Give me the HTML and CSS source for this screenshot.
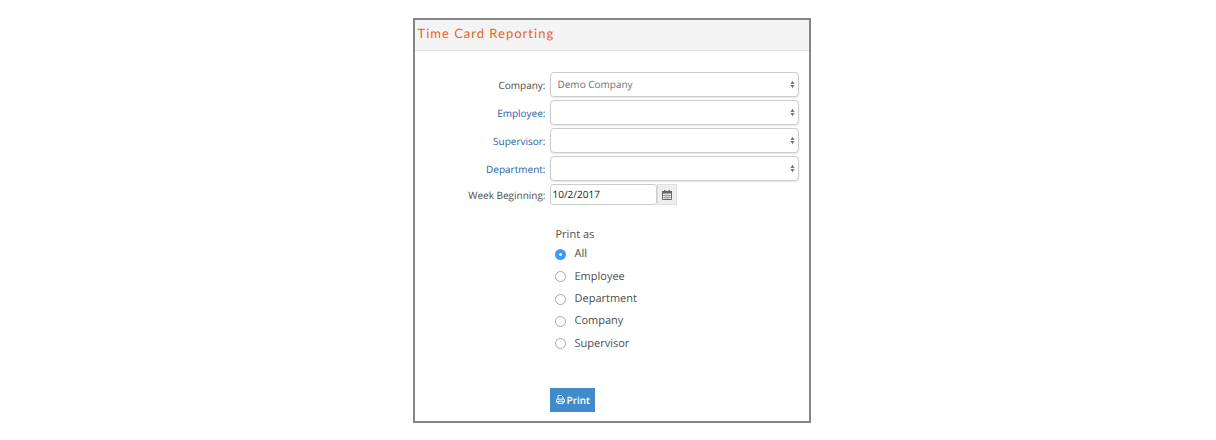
FILE: index.html
```
<!DOCTYPE html>
<html lang="en">
<head>
<meta charset="UTF-8">
<meta name="viewport" content="width=device-width, initial-scale=1.0">
<title>Time Card Reporting</title>
<link rel="stylesheet" href="styles.css">
</head>
<body>

<main class="panel">
    <header class="panel-header">
        <h1>Time Card Reporting</h1>
    </header>
    <form class="report-form" onsubmit="return false">
        <div class="field">
            <label for="company">Company:</label>
            <div class="select">
                <select id="company"><option>Demo Company</option></select>
                <svg class="arrows" viewBox="0 0 6 10" aria-hidden="true"><path d="M3 0.5 5.5 4.5h-5zM3 9.5 5.5 5.5h-5z"/></svg>
            </div>
        </div>
        <div class="field">
            <label for="employee"><a href="#employee">Employee</a>:</label>
            <div class="select">
                <select id="employee"><option></option></select>
                <svg class="arrows" viewBox="0 0 6 10" aria-hidden="true"><path d="M3 0.5 5.5 4.5h-5zM3 9.5 5.5 5.5h-5z"/></svg>
            </div>
        </div>
        <div class="field">
            <label for="supervisor"><a href="#supervisor">Supervisor</a>:</label>
            <div class="select">
                <select id="supervisor"><option></option></select>
                <svg class="arrows" viewBox="0 0 6 10" aria-hidden="true"><path d="M3 0.5 5.5 4.5h-5zM3 9.5 5.5 5.5h-5z"/></svg>
            </div>
        </div>
        <div class="field">
            <label for="department"><a href="#department">Department</a>:</label>
            <div class="select">
                <select id="department"><option></option></select>
                <svg class="arrows" viewBox="0 0 6 10" aria-hidden="true"><path d="M3 0.5 5.5 4.5h-5zM3 9.5 5.5 5.5h-5z"/></svg>
            </div>
        </div>
        <div class="field">
            <label for="week">Week Beginning:</label>
            <div class="date">
                <input type="text" id="week" value="10/2/2017">
                <button type="button" class="date-button" aria-label="Choose date">
                    <svg viewBox="0 0 10 10" aria-hidden="true">
                        <path d="M0.5 1.5h9v8h-9z" fill="#fff" stroke="#666"/>
                        <path d="M0 1h10v2.5H0zM2 0h1.5v2H2zM6.5 0H8v2H6.5z" fill="#666"/>
                        <path d="M1 5.5h8M1 7.5h8M3 3.5v6M5 3.5v6M7 3.5v6" fill="none" stroke="#666" stroke-width="0.5"/>
                    </svg>
                </button>
            </div>
        </div>

        <fieldset class="print-as">
            <legend>Print as</legend>
            <div class="options">
                <label><input type="radio" name="print-as" checked>All</label>
                <label><input type="radio" name="print-as">Employee</label>
                <label><input type="radio" name="print-as">Department</label>
                <label><input type="radio" name="print-as">Company</label>
                <label><input type="radio" name="print-as">Supervisor</label>
            </div>
        </fieldset>

        <button type="submit" class="print-button">
            <svg viewBox="0 0 9 9" aria-hidden="true">
                <path d="M2 4V0.5h3.5L7 2v2M2 7H0.5V5q0-.8.8-.8h6.4q.8 0 .8.8v2H7M2 6.2h5v2.3H2z" fill="none" stroke="#fff"/>
            </svg>
            Print
        </button>
    </form>
</main>

</body>
</html>
```

FILE: styles.css
```
*, *:before, *:after {
    box-sizing: border-box;
}

body {
    margin: 0;
    padding: 18px 0 16px 7px;
    background: #fff;
    color: #4d4d4d;
    font: 10px/16px 'Open Sans', sans-serif;
    text-rendering: geometricPrecision;
}

button, input, select {
    margin: 0;
    font: inherit;
    text-rendering: inherit;
}

a {
    color: #2562a8;
    text-decoration: none;
}

svg {
    display: block;
}

.panel {
    max-width: 398px;
    margin: 0 auto;
    border: 2px solid #858585;
}

.panel-header {
    padding: 4px 3px 8px;
    background: #f4f4f4;
    border-bottom: 1px solid #e0e0e0;
}

.panel-header h1 {
    margin: 0;
    color: #e8622c;
    font: 400 13px/18px Lato, sans-serif;
    letter-spacing: 1px;
}

.report-form {
    padding: 21px 10px 9px 0;
}

.field {
    display: grid;
    grid-template-columns: 131px 1fr;
    column-gap: 4px;
    align-items: center;
    margin-bottom: 3px;
}

.field > label {
    text-align: right;
}

.select {
    position: relative;
}

.select select {
    display: block;
    width: 100%;
    height: 25px;
    padding: 0 20px 1px 7px;
    appearance: none;
    background: #fff;
    border: 1px solid #ccc;
    border-radius: 4px;
    box-shadow: 0 1px 2px rgba(0, 0, 0, 0.1);
    color: #707070;
}

.arrows {
    position: absolute;
    top: 8px;
    right: 4px;
    width: 5px;
    height: 9px;
    fill: #777;
    pointer-events: none;
}

.date {
    display: flex;
}

.date input {
    width: 107px;
    height: 21px;
    padding: 0 2px 1px;
    background: #fff;
    border: 1px solid #ccc;
    border-radius: 3px;
    color: #222;
}

.date-button {
    display: flex;
    align-items: center;
    justify-content: center;
    width: 20px;
    height: 21px;
    padding: 0;
    background: #eee;
    border: 1px solid #ddd;
}

.date-button svg {
    width: 10px;
    height: 10px;
}

.print-as {
    margin: 22px 0 0 135px;
    padding: 0 5px;
    border: 0;
    font-size: 11px;
}

.print-as legend {
    padding: 0 1px;
}

.options {
    display: flex;
    flex-direction: column;
    height: 112px;
}

.options label {
    display: flex;
    flex: 1;
    align-items: center;
    gap: 9px;
}

.options input {
    width: 11px;
    height: 11px;
    appearance: none;
    background: #fff;
    border: 1px solid #aaa;
    border-radius: 50%;
}

.options input:checked {
    background: #fff;
    border: 4px solid #3b99fc;
}

.print-button {
    display: flex;
    align-items: center;
    gap: 2px;
    height: 24px;
    margin: 33px 0 0 135px;
    padding: 0 5px 1px 6px;
    background: #428bca;
    border: 0;
    color: #fff;
    font-weight: 600;
}

.print-button svg {
    width: 9px;
    height: 9px;
}
```
